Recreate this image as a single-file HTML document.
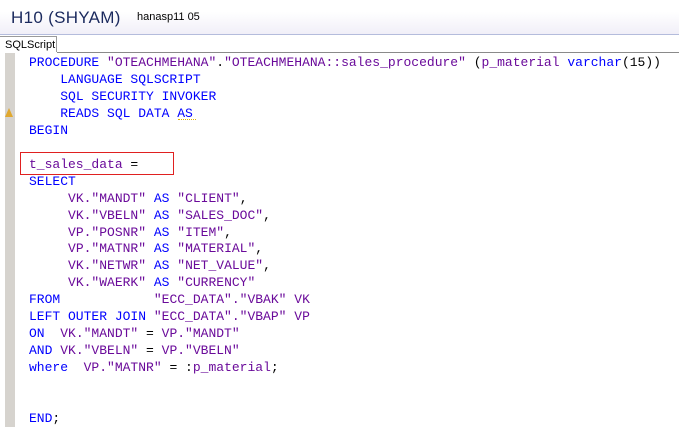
<!DOCTYPE html>
<html><head><style>
body{margin:0;width:679px;height:427px;overflow:hidden;background:#fff;position:relative;font-family:"Liberation Sans",sans-serif}
.hdr{position:absolute;left:0;top:0;width:679px;height:34px;background:linear-gradient(#fff 0%,#fff 35%,#f1eff8 100%);border-bottom:1px solid #b4bcdc}
.t1{position:absolute;left:11px;top:8px;font-size:17px;color:#1b2a5e;letter-spacing:0.3px}
.t2{position:absolute;left:137px;top:11px;font-size:11px;color:#000}
.tab{position:absolute;left:0;top:36px;height:16px;border:1px solid #9a9a9a;border-bottom:none;border-left:none;font-size:11px;line-height:16px;padding-left:5px;box-sizing:border-box;width:57px;background:#fff}
.line{position:absolute;left:57px;top:52px;right:0;height:1px;background:#8a8a8a}
.gut{position:absolute;left:5px;top:53px;width:10px;height:374px;background:#d6d3ce}
pre{position:absolute;left:29px;top:55px;margin:0;font-family:"Liberation Mono",monospace;font-size:13px;line-height:16.95px;color:#000}
.k{color:#0000ff}.p{color:#6a0a9a}
.box{position:absolute;left:20px;top:152px;width:152px;height:21px;border:1px solid #e02020}
.warn{position:absolute;left:5px;top:108px;width:0;height:0;border-left:4px solid transparent;border-right:4px solid transparent;border-bottom:9px solid #e0a830}
.sq{position:absolute;left:178px;top:117px;width:18px;height:2px;border-bottom:1px dotted #e0b000}
</style></head><body>
<div class="hdr"><div class="t1">H10 (SHYAM)</div><div class="t2">hanasp11 05</div></div>
<div class="tab">SQLScript</div>
<div class="line"></div>
<div class="gut"></div>
<div class="warn"></div>
<pre><span class="k">PROCEDURE</span> <span class="p">"OTEACHMEHANA"</span>.<span class="p">"OTEACHMEHANA::sales_procedure"</span> (<span class="p">p_material</span> <span class="k">varchar</span>(15))
    <span class="k">LANGUAGE SQLSCRIPT</span>
    <span class="k">SQL SECURITY INVOKER</span>
    <span class="k">READS SQL DATA AS</span>
<span class="k">BEGIN</span>

<span class="p">t_sales_data</span> =
<span class="k">SELECT</span>
     <span class="p">VK."MANDT"</span> <span class="k">AS</span> <span class="p">"CLIENT"</span>,
     <span class="p">VK."VBELN"</span> <span class="k">AS</span> <span class="p">"SALES_DOC"</span>,
     <span class="p">VP."POSNR"</span> <span class="k">AS</span> <span class="p">"ITEM"</span>,
     <span class="p">VP."MATNR"</span> <span class="k">AS</span> <span class="p">"MATERIAL"</span>,
     <span class="p">VK."NETWR"</span> <span class="k">AS</span> <span class="p">"NET_VALUE"</span>,
     <span class="p">VK."WAERK"</span> <span class="k">AS</span> <span class="p">"CURRENCY"</span>
<span class="k">FROM</span>            <span class="p">"ECC_DATA"."VBAK" VK</span>
<span class="k">LEFT OUTER JOIN</span> <span class="p">"ECC_DATA"."VBAP" VP</span>
<span class="k">ON</span>  <span class="p">VK."MANDT"</span> = <span class="p">VP."MANDT"</span>
<span class="k">AND</span> <span class="p">VK."VBELN"</span> = <span class="p">VP."VBELN"</span>
<span class="k">where</span>  <span class="p">VP."MATNR"</span> = :<span class="p">p_material</span>;


<span class="k">END</span>;</pre>
<div class="sq"></div>
<div class="box"></div>
</body></html>
